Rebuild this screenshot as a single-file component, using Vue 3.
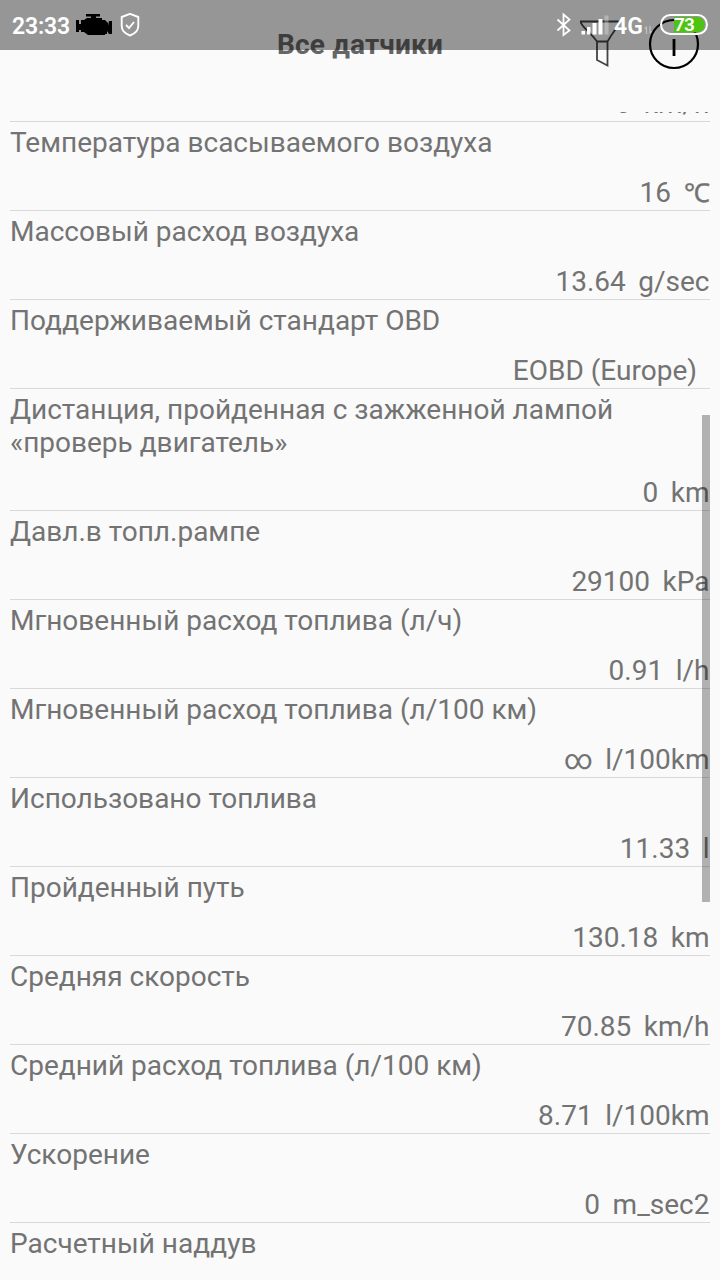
<script setup>
const rows = [
  { label: ['Температура всасываемого воздуха'], value: '16', unit: '℃' },
  { label: ['Массовый расход воздуха'], value: '13.64', unit: 'g/sec' },
  { label: ['Поддерживаемый стандарт OBD'], value: 'EOBD (Europe)', unit: '' },
  { label: ['Дистанция, пройденная с зажженной лампой', '«проверь двигатель»'], value: '0', unit: 'km' },
  { label: ['Давл.в топл.рампе'], value: '29100', unit: 'kPa' },
  { label: ['Мгновенный расход топлива (л/ч)'], value: '0.91', unit: 'l/h' },
  { label: ['Мгновенный расход топлива (л/100 км)'], value: '∞', unit: 'l/100km' },
  { label: ['Использовано топлива'], value: '11.33', unit: 'l' },
  { label: ['Пройденный путь'], value: '130.18', unit: 'km' },
  { label: ['Средняя скорость'], value: '70.85', unit: 'km/h' },
  { label: ['Средний расход топлива (л/100 км)'], value: '8.71', unit: 'l/100km' },
  { label: ['Ускорение'], value: '0', unit: 'm_sec2' },
  { label: ['Расчетный наддув'], value: '', unit: '' },
]
</script>

<template>
  <div class="screen">
    <header class="header">
      <h1 class="title">Все датчики</h1>
      <svg class="actions" width="140" height="80" viewBox="580 0 140 80" fill="none">
        <path d="M580.5 21.5H619.5C619 26 616 27.5 607.5 41.5V65.5L597 60V41.5C589 31 581 26 580.5 21.5ZM597 41.5H607.5" stroke="#444" stroke-width="1.8" />
        <circle cx="674" cy="44" r="24" stroke="#000" stroke-width="2.2" />
        <path d="M674 39V56" stroke="#000" stroke-width="2.8" />
      </svg>
    </header>

    <div class="status">
      <span class="time">23:33</span>
      <svg class="status-icons" width="720" height="50" viewBox="0 0 720 50" fill="none">
        <path d="M86 14H100V16.5H96V18H102V20H105L108 23V26L109 21H112V34H109L107 31V34H105V35H88L84 32H81V30H79V32H76V20H79V24H81V20H84L87 18H91V16.5H86Z" fill="#000" />
        <path d="M130 13.8L138.3 17V26C138.3 30.5 134.8 33.7 130 35.5C125.2 33.7 121.7 30.5 121.7 26V17Z" stroke="#fff" stroke-width="1.9" stroke-linejoin="round" />
        <path d="M126 25L129 28L134 22" stroke="#fff" stroke-width="1.9" />
        <path d="M557.5 19.5L569.5 30.5L563.5 35V14.5L569.5 19.5L557.5 30.5" stroke="#fff" stroke-width="1.8" />
        <path d="M581.5 31H585V34.5H581.5ZM587 27H590.5V34.5H587ZM592.5 23H596.5V34.5H592.5ZM598.5 19H602.5V34.5H598.5Z" fill="#fff" />
        <path d="M604.5 15.5H608.5V34.5H604.5Z" fill="#fff" opacity=".3" />
        <path d="M646.5 34V27M645 29L646.5 26.5M650 26V33M651.5 31L650 33.5" stroke="#fff" stroke-width="1.2" opacity=".42" />
        <path d="M674 17H697A7.7 7.7 0 0 1 697 32.4H674Z" fill="#4fc312" />
        <rect x="661" y="15" width="46" height="19" rx="9.5" stroke="#fff" stroke-width="2" />
      </svg>
      <span class="network">4G</span>
      <span class="charge">73</span>
    </div>

    <main class="list">
      <div class="partial"><span>0</span><span class="unit">km/h</span></div>
      <section v-for="row in rows" :key="row.label[0]" class="row">
        <div class="label">
          <div v-for="line in row.label" :key="line">{{ line }}</div>
        </div>
        <div class="value">
          <span>{{ row.value }}</span><span class="unit" :class="{ degree: row.unit === '℃' }">{{ row.unit }}</span>
        </div>
      </section>
    </main>
    <div class="scrollbar"></div>
  </div>
</template>

<style>
body {
  background: #fafafa;
  overflow: hidden;
}
</style>

<style scoped>
.screen {
  position: relative;
  width: 720px;
  height: 1280px;
  overflow: hidden;
  background: #fafafa;
  color: #737373;
  font-family: Roboto, "Liberation Sans", sans-serif;
}
.header {
  height: 112px;
}
.title {
  margin: 0;
  padding-top: 28px;
  text-align: center;
  font-size: 28px;
  line-height: 34px;
  font-weight: 700;
  letter-spacing: 0.15px;
  color: #666;
}
.actions {
  position: absolute;
  top: 0;
  left: 580px;
}
.status {
  position: absolute;
  top: 0;
  left: 0;
  width: 720px;
  height: 50px;
  background: rgba(0, 0, 0, 0.4);
  color: #fff;
}
.status-icons {
  position: absolute;
  top: 0;
  left: 0;
}
.time,
.network,
.charge {
  position: absolute;
  line-height: 30px;
  white-space: nowrap;
}
.time {
  left: 12px;
  top: 12px;
  font-size: 23px;
  font-weight: 600;
  letter-spacing: -0.2px;
}
.network {
  left: 614px;
  top: 12px;
  font-size: 23px;
  font-weight: 600;
}
.charge {
  left: 674px;
  top: 10px;
  font-size: 19px;
  font-weight: 600;
  letter-spacing: -0.8px;
}
.list {
  height: 1168px;
  padding: 0 10px;
  overflow: hidden;
  font-size: 28px;
  line-height: 33px;
}
.partial,
.value {
  display: flex;
  justify-content: flex-end;
  gap: 12.5px;
  padding-right: 0.5px;
  white-space: pre;
}
.partial {
  height: 8px;
  padding-bottom: 1px;
  align-items: flex-end;
  border-bottom: 1px solid #d9d9d9;
}
.row {
  padding: 4px 0 1px;
  border-bottom: 1px solid #d9d9d9;
}
.label {
  margin-bottom: 17px;
  white-space: nowrap;
}
.value {
  height: 33px;
}
.degree {
  font-size: 26px;
  line-height: 34px;
  -webkit-text-stroke: 0.4px currentColor;
}
.scrollbar {
  position: absolute;
  left: 702px;
  top: 415px;
  width: 8px;
  height: 487px;
  background: rgba(0, 0, 0, 0.29);
}
</style>
